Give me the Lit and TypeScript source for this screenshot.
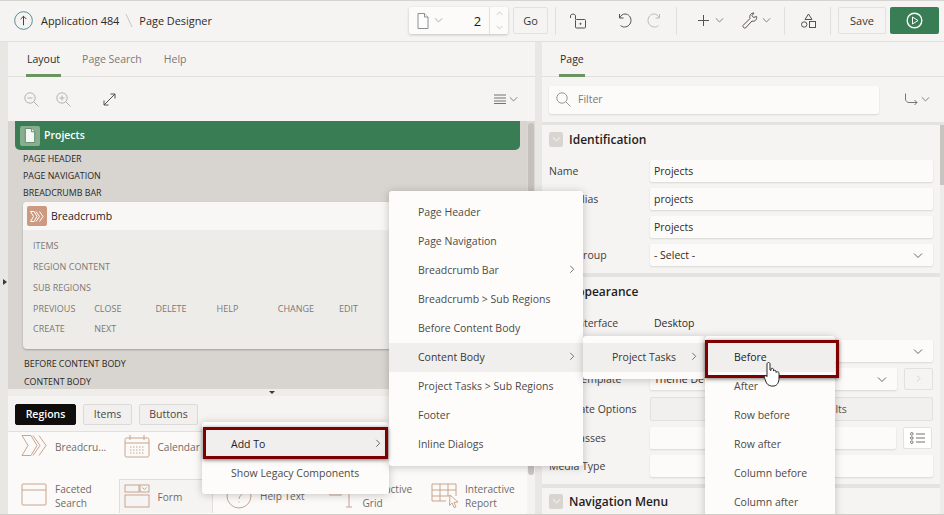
import { LitElement, html, css, svg } from "lit";
import { customElement } from "lit/decorators.js";

const chev = (dir: "d" | "u" | "r", w = 9, c = "#77736f") => {
  const p = dir === "d" ? "M1 1.5 L5 5.5 L9 1.5" : dir === "u" ? "M1 5.5 L5 1.5 L9 5.5" : "M1.5 1 L5.5 5 L1.5 9";
  const vb = dir === "r" ? "0 0 7 10" : "0 0 10 7";
  const h = dir === "r" ? w * 10 / 7 : w * 0.7;
  return html`<svg width=${w} height=${h} viewBox=${vb} fill="none" stroke=${c} stroke-width="1">${svg`<path d=${p}/>`}</svg>`;
};

const T = "#c9a48e";
const galleryIcons: Record<string, unknown> = {
  crumb: svg`<path d="M1 1.5H10L16 11.5L10 21.5H1L7 11.5Z"/><path d="M12 1.5L19 11.5L12 21.5"/><path d="M18 1.5L25 11.5L18 21.5"/>`,
  cal: svg`<rect x="1" y="4" width="24" height="19" rx="1.5"/><path d="M1 9H25M6 1V6M20 1V6"/><path stroke-dasharray="1.5 1.5" d="M6 13H21M6 16H21M6 19H21"/>`,
  facet: svg`<rect x="1" y="1" width="24" height="21" rx="1"/><path d="M1 7H25"/>`,
  form: svg`<rect x="1" y="1" width="14" height="7"/><rect x="16" y="1" width="9" height="7"/><path d="M18.5 3.5L20.5 5.5L22.5 3.5"/><rect x="1" y="11" width="24" height="12"/>`,
  help: svg`<circle cx="13" cy="13" r="12"/><path d="M10 10C10 6 16 6 16 10C16 13 13 12.5 13 16M13 18.5V19.5"/>`,
  grid: svg`<rect x="1" y="1" width="11" height="11"/><path d="M17 9H23M17 24H23M20 9V24"/>`,
  report: svg`<path d="M15 18H1V1H25V13M1 7H25M1 13H19M9 1V18M17 1V13"/><path d="M19 12L27 19L23 19.5L25 24L23 24.5L21 20L18.5 22.5Z"/>`,
};
const gi = (k: string) => html`<svg class="gicon" width="26" height="26" viewBox="0 0 26 26" fill="none" stroke=${T} stroke-width="1">${galleryIcons[k]}</svg>`;

@customElement("app-root")
export class AppRoot extends LitElement {
  static styles = css`
    :host { display:block; width:944px; height:515px; position:relative; overflow:hidden; box-sizing:border-box;
      font-family:"Open Sans","Noto Sans",sans-serif; font-size:10.5px; color:#2d2a27; background:#f5f4f2;
      border-top:1px solid #d6d4d1; border-bottom:1px solid #d0cecb; }
    * { box-sizing:border-box; }
    svg { display:block; flex:none; }
    .gicon { overflow:visible; }
    .header { height:41px; display:flex; align-items:center; border-bottom:1px solid #e2e0dd; padding:0 5px 1px 14px; }
    .crumbs { flex:1; display:flex; align-items:center; font-size:10.9px; margin-top:-1px; }
    .crumbs .app { margin-left:8px; }
    .crumbs .slash { margin:0 5px 0 5px; }
    .tools { display:flex; align-items:center; }
    .pagesel { width:99px; height:27px; display:flex; align-items:center; background:#fcfbf9; border-radius:2px; box-shadow:0 1px 3px rgba(0,0,0,.2); padding-left:8px; }
    .pagesel .num { width:47px; text-align:right; font-size:13px; color:#1c1a18; padding-right:1px; margin-left:-1px; }
    .pagesel .chevd { margin-left:5px; }
    .spin { margin-left:7px; height:27px; width:22px; border-left:1px solid #e3e1de; display:flex; flex-direction:column; align-items:center; justify-content:center; gap:9px; }
    .btn { height:27px; display:flex; align-items:center; justify-content:center; border:1px solid #e3e1de; border-radius:2px; background:#f5f4f2; font-size:11px; color:#3a3734; }
    .go { width:35px; margin-left:5px; }
    .sep { width:1px; height:28px; background:#e2e0dd; }
    .sep1 { margin-left:7px; } .lock { margin-left:14px; } .undo { margin-left:31px; } .redo { margin-left:15px; }
    .sep2 { margin-left:14px; } .plus { margin-left:20px; display:flex; align-items:center; gap:5px; }
    .wrench { margin-left:18px; display:flex; align-items:center; gap:3px; }
    .sep3 { margin-left:13px; } .shapes { margin-left:16px; } .sep4 { margin-left:14px; }
    .save { width:48px; margin-left:7px; }
    .run { width:49px; height:27px; margin-left:4px; background:#397d54; border-radius:2px; display:flex; align-items:center; justify-content:center; }

    .main { display:flex; height:472px; }
    .gutter { width:8px; background:#e9e7e4; display:flex; align-items:center; }
    .gutter i { display:block; margin:7px 0 0 3px; border-left:4px solid #3c3a38; border-top:3px solid transparent; border-bottom:3px solid transparent; }
    .left { width:527px; display:flex; flex-direction:column; }
    .split { width:7px; background:#e9e7e4; }
    .right { width:402px; display:flex; flex-direction:column; }
    .tabs { height:35px; border-bottom:1px solid #e2e0dd; display:flex; padding-left:18px; gap:20px; flex:none; }
    .tab { height:35px; line-height:35px; color:#7d7874; position:relative; padding:0 1px; }
    .tab.on { color:#2d2a27; border-bottom:3px solid #6b9461; }
    .rtabs { padding-left:17px; }
    .ltools { height:44px; flex:none; display:flex; align-items:center; padding-left:16px; }
    .ltools .zin { margin-left:17px; } .ltools .exp { margin-left:32px; }
    .ltools .menu { margin-left:378px; display:flex; align-items:center; gap:3px; }
    .canvas { height:268px; flex:none; background:#d8d4d0; display:flex; overflow:hidden; }
    .cinner { width:519px; padding-left:7px; }
    .cscroll { width:8px; background:#dcd9d5; padding:2px 1px; }
    .cscroll i { display:block; height:120px; background:#c4c0bc; border-radius:3px; }
    .pagebar { width:505px; height:29px; background:#397d54; border-radius:0 0 5px 5px; display:flex; align-items:center; padding-left:5px; color:#fff; font-weight:600; }
    .pagebar .pi { width:20px; height:20px; border-radius:2px; background:#88ae8e; margin-right:4px; display:flex; align-items:center; justify-content:center; }
    .pagebar .pt { margin-top:-2px; }
    .zone { height:17px; line-height:17px; font-size:8.9px; padding-left:8px; color:#2a2826; }
    .card { margin:1px 0 0 8px; width:488px; height:147px; border-radius:4px; background:#eeece9; box-shadow:0 1px 2px rgba(0,0,0,.25); overflow:hidden; }
    .chead { height:28px; background:#f8f7f5; display:flex; align-items:center; padding-left:4px; gap:4px; color:#23211f; }
    .chead .ci { width:20px; height:20px; border-radius:2px; background:#cb9a80; display:flex; align-items:center; justify-content:center; }
    .cbody { padding:5px 0 0 10px; font-size:9px; color:#7d7874; }
    .cbody .r { height:21px; line-height:21px; }
    .cbody .btns { display:grid; grid-template-columns:repeat(6,61.2px); height:20px; line-height:20px; }
    .cbody .r + .btns { margin-top:1px; }
    .z2 { margin-top:6px; padding-left:9px; height:18px; }
    .z2 + .z2 { margin-top:0; }

    .lsplit { height:7px; flex:none; background:#efedea; display:flex; justify-content:center; }
    .lsplit i { display:block; margin-top:2px; border-top:3px solid #3c3a38; border-left:3px solid transparent; border-right:3px solid transparent; }
    .gtabs { height:36px; flex:none; display:flex; align-items:flex-start; padding:8px 0 0 7px; gap:7px; border-bottom:1px solid #e2e0dd; }
    .gt { height:21px; display:flex; align-items:center; justify-content:center; border:1px solid #dcdad7; border-radius:2px; background:#f1f0ee; color:#4a4643; padding-bottom:2px; }
    .gt.on { background:#0f0e0d; border-color:#0f0e0d; color:#fff; font-weight:600; width:61px; }
    .gt.i { width:49px; } .gt.b { width:59px; }
    .gallery { flex:1; display:flex; background:#fbfaf8; overflow:hidden; min-height:0; }
    .ggrid { width:519px; padding:0 0 0 8px; margin-top:-2px; display:grid; grid-template-columns:repeat(5,94.5px); column-gap:8px; row-gap:15px; grid-auto-rows:34px; }
    .gi { display:flex; align-items:center; gap:8px; padding-left:5px; color:#6f6b67; line-height:14px; font-size:10.1px; }
    .gi.sel { background:#f5f4f2; border:solid #e0ddda; border-width:1px 1px 0 1px; padding-left:4px; }
    .gscroll { width:8px; padding:0 1px; background:#f4f3f1; }
    .gscroll i { display:block; height:43px; background:#c9c6c2; border-radius:3px; }

    .filterrow { height:45px; flex:none; display:flex; align-items:center; padding:0 0 0 7px; }
    .filter { width:330px; height:28px; background:#fcfbf9; border-radius:2px; box-shadow:0 1px 2px rgba(0,0,0,.12); display:flex; align-items:center; padding:0 0 2px 7px; gap:7px; color:#7d7874; }
    .filter svg { margin-top:2px; }
    .fmenu { margin-left:26px; display:flex; align-items:center; gap:3px; }
    .pbody { flex:1; display:flex; min-height:0; border-top:3px solid #e5e3e0; }
    .props { width:398px; overflow:hidden; }
    .pscroll { width:4px; background:#eeecea; }
    .pscroll i { display:block; height:60px; background:#c8c5c1; }
    .sec { padding:7px; }
    .sec + .sec { border-top:4px solid #e5e3e0; }
    .sech { height:15px; display:flex; align-items:center; gap:6px; font-size:12px; font-weight:600; color:#1f1d1b; margin-bottom:13px; }
    .sech i { display:flex; align-items:center; justify-content:center; width:14px; height:15px; border-radius:2px; background:#d8d4d0; }
    .rows { display:flex; flex-direction:column; gap:6px; }
    .row { display:flex; height:22px; align-items:center; }
    .row label { width:101px; flex:none; color:#403d3a; }
    .f { flex:1; height:22px; background:#fcfbf9; border-radius:2px; box-shadow:0 1px 2px rgba(0,0,0,.12); display:flex; align-items:center; justify-content:space-between; padding:0 10px 0 4px; color:#2d2a27; }
    .val { padding-left:4px; }
    .row .mini { width:29px; height:22px; margin-left:7px; flex:none; display:flex; align-items:center; justify-content:center; border:1px solid #e3e1de; border-radius:2px; }
    .row .mini.w { background:#fff; margin-right:1px; }
    .topt { height:25px; }
    .topt .o { flex:1; height:24px; border:1px solid #e3e1de; border-radius:2px; background:#f1f0ee; display:flex; align-items:center; justify-content:center; color:#55514e; }
    .sec.last { padding-top:6px; }

    .pop { position:absolute; background:#fdfcfb; border-radius:3px; box-shadow:0 1px 8px rgba(0,0,0,.22); padding:7px 0; color:#4e4a46; }
    .mi { height:29px; display:flex; align-items:center; justify-content:space-between; padding:0 8px 2px 29px; white-space:nowrap; }
    .mi.on { background:#f0efed; color:#3a3734; }
    .m1 { left:202px; top:421px; width:187px; padding:8px 0 6px; }
    .m2 { left:389px; top:190px; width:194px; }
    .m3 { left:583px; top:335px; width:122px; }
    .m4 { left:705px; top:335px; width:130px; }
    .m1 .mi.on, .m4 .mi.on { color:#23211f; }
    .mark { position:absolute; border:3px solid #7f0000; box-shadow:0 1px 4px rgba(0,0,0,.55); }
    .mk1 { left:203px; top:426px; width:185px; height:32px; }
    .mk2 { left:705px; top:339px; width:134px; height:38px; }
    .hand { position:absolute; left:764px; top:361px; }
  `;

  render() {
    const filePath = svg`<path d="M1 .5H7.5L11 4V15.5H1Z"/><path d="M7.5 .5V4H11"/>`;
    return html`
      <div class="header">
        <div class="crumbs">
          <svg width="19" height="19" viewBox="0 0 20 20" fill="none"><circle cx="10" cy="10" r="9.3" stroke="#4b8a97" stroke-width="1"/><path d="M10 15V5.5M7 8.5L10 5.5L13 8.5" stroke="#3d3a38"/></svg>
          <span class="app">Application 484</span>
          <svg class="slash" width="10" height="15" viewBox="0 0 10 15" fill="none" stroke="#c9c6c2"><path d="M2 1L8 14"/></svg>
          <span>Page Designer</span>
        </div>
        <div class="tools">
          <div class="pagesel">
            <svg width="12" height="16" viewBox="0 0 12 16" fill="#fdfdfd" stroke="#8a8f96">${filePath}</svg>
            <span class="chevd">${chev("d", 9, "#a0a4a8")}</span>
            <span class="num">2</span>
            <div class="spin">${chev("u", 7, "#b0aeab")}${chev("d", 7, "#b0aeab")}</div>
          </div>
          <div class="btn go">Go</div>
          <div class="sep sep1"></div>
          <svg class="lock" width="16" height="16" viewBox="0 0 16 16" fill="none" stroke="#55514e"><rect x="5.5" y="6.5" width="10" height="8.5" rx="1"/><path d="M.5 5V3C.5 .5 5.5 .5 5.5 3V6.5"/><circle cx="10.5" cy="10.8" r=".6" fill="#55514e"/></svg>
          <svg class="undo" width="15" height="15" viewBox="0 0 15 15" fill="none" stroke="#55514e"><path d="M2.5 1V5H6.5"/><path d="M2.5 5C4 2 6 1 8 1C11.5 1 14 4 14 7.5C14 11 11 14 7.5 14C6 14 4.5 13.5 3.5 12.5"/></svg>
          <svg class="redo" width="15" height="15" viewBox="0 0 15 15" fill="none" stroke="#bdbab7"><path d="M12.5 1V5H8.5"/><path d="M12.5 5C11 2 9 1 7 1C3.5 1 1 4 1 7.5C1 11 4 14 7.5 14C9 14 10.5 13.5 11.5 12.5"/></svg>
          <div class="sep sep2"></div>
          <div class="plus"><svg width="13" height="13" viewBox="0 0 13 13" stroke="#55514e" fill="none"><path d="M6.5 1V12M1 6.5H12"/></svg>${chev("d")}</div>
          <div class="wrench"><svg width="17" height="17" viewBox="0 0 17 17" fill="none" stroke="#55514e"><path d="M1 13.5L8 6.5C7 3.5 9 .8 12 1L10 3.5L11.5 5.5L14.5 4.5C15.5 7.5 12.5 10 10 9L3.5 16C2 16.5 .5 15 1 13.5Z"/></svg>${chev("d")}</div>
          <div class="sep sep3"></div>
          <svg class="shapes" width="15" height="15" viewBox="0 0 15 15" fill="none" stroke="#55514e"><path d="M7.5 1L11 6.5H4Z"/><circle cx="3.2" cy="11.5" r="2.7"/><rect x="8.5" y="8.5" width="6" height="6"/></svg>
          <div class="sep sep4"></div>
          <div class="btn save">Save</div>
          <div class="run"><svg width="17" height="17" viewBox="0 0 17 17" fill="none"><circle cx="8.5" cy="8.5" r="7.3" stroke="#fff" stroke-width="1.4"/><path d="M6.5 5L12 8.5L6.5 12Z" stroke="#fff"/></svg></div>
        </div>
      </div>
      <div class="main">
        <div class="gutter"><i></i></div>
        <div class="left">
          <div class="tabs"><div class="tab on">Layout</div><div class="tab">Page Search</div><div class="tab">Help</div></div>
          <div class="ltools">
            <svg width="15" height="15" viewBox="0 0 15 15" fill="none" stroke="#b5b2af"><circle cx="6" cy="6" r="5.2"/><path d="M3.5 6H8.5M10 10L14.5 14.5"/></svg>
            <svg class="zin" width="15" height="15" viewBox="0 0 15 15" fill="none" stroke="#b5b2af"><circle cx="6" cy="6" r="5.2"/><path d="M3.5 6H8.5M6 3.5V8.5M10 10L14.5 14.5"/></svg>
            <svg class="exp" width="13" height="13" viewBox="0 0 13 13" fill="none" stroke="#55514e"><path d="M1 12L12 1M7.5 1H12V5.5M1 7.5V12H5.5"/></svg>
            <div class="menu"><svg width="12" height="10" viewBox="0 0 12 10" stroke="#77736f"><path d="M0 1H12M0 4H12M0 7H12M0 9.5H12"/></svg>${chev("d")}</div>
          </div>
          <div class="canvas">
            <div class="cinner">
              <div class="pagebar"><span class="pi"><svg width="12" height="15" viewBox="0 0 12 16" fill="#f5f7f5" stroke="#5c8a68">${filePath}</svg></span><span class="pt">Projects</span></div>
              <div class="zone">PAGE HEADER</div>
              <div class="zone">PAGE NAVIGATION</div>
              <div class="zone">BREADCRUMB BAR</div>
              <div class="card">
                <div class="chead"><span class="ci"><svg width="15" height="11" viewBox="0 0 15 11" fill="none" stroke="#fff"><path d="M.5 .5H4L7 5.5L4 10.5H.5L3.5 5.5Z"/><path d="M6 .5L9.5 5.5L6 10.5M9.5 .5L13 5.5L9.5 10.5"/></svg></span>Breadcrumb</div>
                <div class="cbody">
                  <div class="r">ITEMS</div><div class="r">REGION CONTENT</div><div class="r">SUB REGIONS</div>
                  <div class="btns"><span>PREVIOUS</span><span>CLOSE</span><span>DELETE</span><span>HELP</span><span>CHANGE</span><span>EDIT</span></div>
                  <div class="btns"><span>CREATE</span><span>NEXT</span></div>
                </div>
              </div>
              <div class="zone z2">BEFORE CONTENT BODY</div>
              <div class="zone z2">CONTENT BODY</div>
            </div>
            <div class="cscroll"><i></i></div>
          </div>
          <div class="lsplit"><i></i></div>
          <div class="gtabs"><div class="gt on">Regions</div><div class="gt i">Items</div><div class="gt b">Buttons</div></div>
          <div class="gallery">
            <div class="ggrid">
              <div class="gi">${gi("crumb")}<span>Breadcru...</span></div>
              <div class="gi">${gi("cal")}<span>Calendar</span></div>
              <div class="gi">${gi("facet")}<span>Cards</span></div>
              <div class="gi">${gi("facet")}<span>Chart</span></div>
              <div class="gi">${gi("facet")}<span>Classic</span></div>
              <div class="gi">${gi("facet")}<span>Faceted<br />Search</span></div>
              <div class="gi sel">${gi("form")}<span>Form</span></div>
              <div class="gi">${gi("help")}<span>Help Text</span></div>
              <div class="gi">${gi("grid")}<span>Interactive<br />Grid</span></div>
              <div class="gi">${gi("report")}<span>Interactive<br />Report</span></div>
            </div>
            <div class="gscroll"><i></i></div>
          </div>
        </div>
        <div class="split"></div>
        <div class="right">
          <div class="tabs rtabs"><div class="tab on">Page</div></div>
          <div class="filterrow">
            <div class="filter"><svg width="15" height="15" viewBox="0 0 15 15" fill="none" stroke="#9a9794"><circle cx="6" cy="6" r="5.2"/><path d="M10 10L14.5 14.5"/></svg>Filter</div>
            <div class="fmenu"><svg width="13" height="13" viewBox="0 0 13 13" fill="none" stroke="#77736f"><path d="M.5 .5V6C.5 8 2 9.5 4 9.5H12M9.5 7L12 9.5L9.5 12"/></svg>${chev("d")}</div>
          </div>
          <div class="pbody">
            <div class="props">
              <div class="sec">
                <div class="sech"><i>${chev("d", 9, "#fff")}</i>Identification</div>
                <div class="rows">
                  <div class="row"><label>Name</label><div class="f">Projects</div></div>
                  <div class="row"><label>Page Alias</label><div class="f">projects</div></div>
                  <div class="row"><label>Title</label><div class="f">Projects</div></div>
                  <div class="row"><label>Page Group</label><div class="f">- Select -${chev("d", 10, "#666")}</div></div>
                </div>
              </div>
              <div class="sec">
                <div class="sech"><i>${chev("d", 9, "#fff")}</i>Appearance</div>
                <div class="rows">
                  <div class="row"><label>User Interface</label><span class="val">Desktop</span></div>
                  <div class="row"><label>Page Mode</label><div class="f">Normal${chev("d", 10, "#666")}</div></div>
                  <div class="row"><label>Page Template</label><div class="f">Theme Default${chev("d", 10, "#666")}</div><div class="mini">${chev("r", 5, "#c4c1be")}</div></div>
                  <div class="row topt"><label>Template Options</label><div class="o">Use Template Defaults</div></div>
                  <div class="row"><label>CSS Classes</label><div class="f"></div><div class="mini w"><svg width="15" height="12" viewBox="0 0 15 12" fill="none" stroke="#77736f"><circle cx="1.8" cy="1.8" r="1.3"/><circle cx="1.8" cy="6" r="1.3"/><circle cx="1.8" cy="10.2" r="1.3"/><path d="M6 2H15M6 6H15M6 10H15"/></svg></div></div>
                  <div class="row"><label>Media Type</label><div class="f"></div></div>
                </div>
              </div>
              <div class="sec last">
                <div class="sech"><i>${chev("d", 9, "#fff")}</i>Navigation Menu</div>
              </div>
            </div>
            <div class="pscroll"><i></i></div>
          </div>
        </div>
      </div>

      <div class="pop m1">
        <div class="mi on">Add To${chev("r", 6, "#55514e")}</div>
        <div class="mi">Show Legacy Components</div>
      </div>
      <div class="pop m2">
        <div class="mi">Page Header</div>
        <div class="mi">Page Navigation</div>
        <div class="mi">Breadcrumb Bar${chev("r", 6, "#5f5b58")}</div>
        <div class="mi">Breadcrumb &gt; Sub Regions</div>
        <div class="mi">Before Content Body</div>
        <div class="mi on">Content Body${chev("r", 6, "#5f5b58")}</div>
        <div class="mi">Project Tasks &gt; Sub Regions</div>
        <div class="mi">Footer</div>
        <div class="mi">Inline Dialogs</div>
      </div>
      <div class="pop m3"><div class="mi on">Project Tasks${chev("r", 6, "#5f5b58")}</div></div>
      <div class="pop m4">
        <div class="mi on">Before</div>
        <div class="mi">After</div>
        <div class="mi">Row before</div>
        <div class="mi">Row after</div>
        <div class="mi">Column before</div>
        <div class="mi">Column after</div>
      </div>
      <div class="mark mk1"></div>
      <div class="mark mk2"></div>
      <svg class="hand" width="17" height="25" viewBox="0 0 17 25" fill="#fff" stroke="#2a2826" stroke-width="1"><path d="M3 10V2C3 0 6 0 6 2V8L7 8.5V7C7 6 9.5 6 9.5 7.5V9C9.5 8 12 8 12 9.5V10.5C12 9.5 15 9.5 15 11V16C15 20 13.5 23.5 10 24C7 24.5 4 23.5 2.5 21L.5 16C0 14 2 13 3 14.5Z"/></svg>
    `;
  }
}
